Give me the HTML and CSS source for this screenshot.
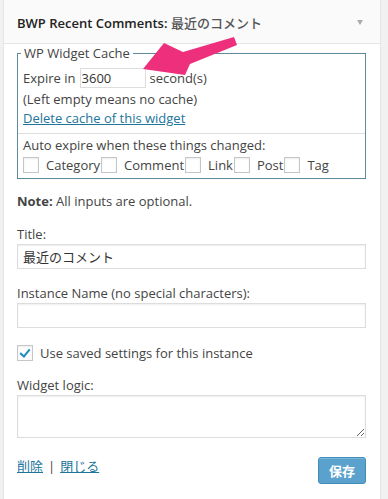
FILE: index.html
```html
<!DOCTYPE html>
<html>
	<head>
		<title>BWP Recent Comments</title>
		<link rel="stylesheet" href="styles.css">
	</head>
	<body>
		<div class="widget">
			<div class="widget-top">
				<h4 class="widget-title">BWP Recent Comments: <span class="title-jp">最近のコメント</span></h4>
				<span class="widget-arrow"></span>
			</div>
			<div class="widget-inside">
				<fieldset class="cache-box">
					<legend>WP Widget Cache</legend>
					<div class="cache-section">
						<div class="expire-row">
							<span>Expire in</span>
							<input class="expire-input" value="3600">
							<span>second(s)</span>
						</div>
						<p class="cache-hint">(Left empty means no cache)</p>
						<a class="cache-link" href="#">Delete cache of this widget</a>
					</div>
					<div class="cache-section auto-expire">
						<p class="auto-title">Auto expire when these things changed:</p>
						<div class="expire-options">
							<label class="option"><input type="checkbox" class="check">Category</label>
							<label class="option"><input type="checkbox" class="check">Comment</label>
							<label class="option"><input type="checkbox" class="check">Link</label>
							<label class="option"><input type="checkbox" class="check">Post</label>
							<label class="option"><input type="checkbox" class="check">Tag</label>
						</div>
					</div>
				</fieldset>

				<p class="note"><strong>Note:</strong> All inputs are optional.</p>

				<div class="field">
					<label class="field-label">Title:</label>
					<input class="text-input" value="最近のコメント">
				</div>
				<div class="field">
					<label class="field-label">Instance Name (no special characters):</label>
					<input class="text-input">
				</div>

				<label class="saved-row"><input type="checkbox" class="check" checked>Use saved settings for this instance</label>

				<div class="field logic-field">
					<label class="field-label">Widget logic:</label>
					<textarea class="logic-input"></textarea>
				</div>

				<div class="widget-actions">
					<div class="action-links">
						<a href="#">削除</a><span class="pipe">|</span><a href="#">閉じる</a>
					</div>
					<button class="save-button">保存</button>
				</div>
			</div>
		</div>

		<svg class="pointer-arrow" width="388" height="499" viewBox="0 0 388 499">
			<polygon points="143,69 164,43 183,52 234,37 237,45 190,64 185,75" fill="#ee2f7b"/>
		</svg>
	</body>
</html>
```

FILE: styles.css
```css
body{
	margin: 0;
	background-color: #f1f1f1;
	font-family: "Open Sans", "Noto Sans CJK JP", sans-serif;
	font-size: 13px;
	color: #444;
}
p{
	margin: 0;
}
a{
	color: #21759b;
}

.widget{
	margin-left: 3px;
	width: 378px;
	min-height: 520px;
	box-sizing: border-box;
	background-color: white;
	border: 1px solid #e5e5e5;
	border-top: none;
}
.widget-top{
	height: 42px;
	box-sizing: content-box;
	padding: 1px 17px 0 13px;
	display: flex;
	align-items: center;
	justify-content: space-between;
	background-color: #fafafa;
	border-bottom: 1px solid #e5e5e5;
}
.widget-title{
	margin: 0;
	font-size: 13px;
	font-weight: 600;
	color: #222;
}
.title-jp{
	font-weight: 500;
	color: #555;
}
.widget-arrow{
	border-left: 3px solid transparent;
	border-right: 3px solid transparent;
	border-top: 5px solid #aaa;
}
.widget-inside{
	padding: 0 14px 15px 13px;
}

.cache-box{
	margin: 0;
	padding: 0 0 3px;
	min-width: 0;
	border: 1px solid #5d8b9b;
}
.cache-box legend{
	margin-left: 3px;
	padding: 0 3px;
	line-height: 18px;
}
.cache-section{
	padding: 5px 5px 0;
}
.expire-row{
	display: flex;
	align-items: center;
	gap: 4px;
	height: 22px;
}
.expire-input{
	width: 66px;
	height: 20px;
	box-sizing: border-box;
	padding: 0 1px;
	border: 1px solid #ddd;
	font-family: inherit;
	font-size: 13px;
	color: #333;
}
.cache-hint{
	line-height: 20px;
}
.cache-link{
	display: block;
	line-height: 18px;
}
.auto-expire{
	margin-top: 6px;
	padding-top: 1px;
	border-top: 1px solid #ddd;
}
.auto-title{
	line-height: 20px;
}
.expire-options{
	display: flex;
	align-items: center;
	height: 20px;
}
.option{
	display: flex;
	align-items: center;
	margin-right: 1px;
}

.check{
	appearance: none;
	-webkit-appearance: none;
	position: relative;
	width: 16px;
	height: 16px;
	margin: 0 7px 0 0;
	box-sizing: border-box;
	background-color: white;
	border: 1px solid #c4c7ca;
	box-shadow: inset 0 1px 2px rgba(0, 0, 0, 0.08);
}
.check:checked::before{
	content: "";
	position: absolute;
	left: 4px;
	top: 1px;
	width: 4px;
	height: 8px;
	border-right: 2px solid #1e8cbe;
	border-bottom: 2px solid #1e8cbe;
	transform: rotate(40deg);
}

.note{
	margin-top: 13px;
	line-height: 18px;
}
.field{
	margin-top: 15px;
}
.field-label{
	display: block;
	line-height: 18px;
	margin-bottom: 1px;
}
.text-input{
	display: block;
	width: 100%;
	height: 25px;
	box-sizing: border-box;
	padding: 0 5px;
	border: 1px solid #ddd;
	box-shadow: inset 0 1px 2px rgba(0, 0, 0, 0.07);
	font-family: inherit;
	font-size: 13px;
	color: #333;
}
.saved-row{
	display: flex;
	align-items: center;
	height: 20px;
	margin-top: 15px;
}
.logic-field{
	margin-top: 13px;
}
.logic-input{
	display: block;
	width: 100%;
	height: 43px;
	box-sizing: border-box;
	border: 1px solid #ddd;
	box-shadow: inset 0 1px 2px rgba(0, 0, 0, 0.07);
	font-family: inherit;
}

.widget-actions{
	display: flex;
	justify-content: space-between;
	align-items: flex-start;
	margin-top: 19px;
}
.action-links{
	line-height: 18px;
}
.pipe{
	margin: 0 5px;
}
.save-button{
	width: 48px;
	height: 27px;
	padding: 0;
	background-color: #5aa2cd;
	border: 1px solid #428cb7;
	border-radius: 3px;
	box-shadow: inset 0 1px 0 rgba(150, 210, 235, 0.5);
	color: white;
	font-family: inherit;
	font-size: 13px;
	font-weight: bold;
}

.pointer-arrow{
	position: absolute;
	top: 0;
	left: 0;
	pointer-events: none;
}
```
